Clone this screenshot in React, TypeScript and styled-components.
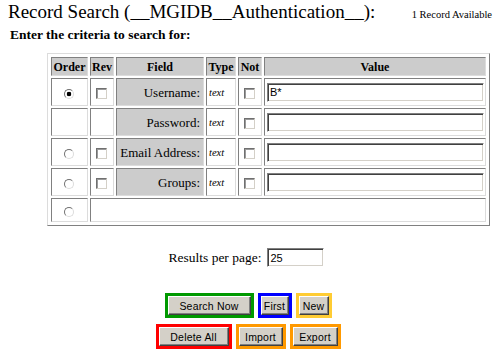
import React from 'react';
import styled, { createGlobalStyle } from 'styled-components';

const GlobalStyle = createGlobalStyle`
  html, body {
    margin: 0;
    padding: 0;
    background: #fff;
  }
  body {
    font-family: "Liberation Serif", "Times New Roman", serif;
    color: #000;
  }
`;

const serif = `"Liberation Serif", "Times New Roman", serif`;
const sans = `"Liberation Sans", Arial, sans-serif`;

const Page = styled.div`
  width: 496px;
  height: 353px;
  overflow: hidden;
`;

const TitleLine = styled.div`
  display: flex;
  justify-content: space-between;
  align-items: baseline;
  height: 23px;
  line-height: 23px;
  padding: 0 4px 0 8px;
  white-space: nowrap;
`;

const Title = styled.span`
  font-size: 19px;
`;

const Count = styled.span`
  font-size: 10.5px;
`;

const Prompt = styled.div`
  margin-top: 5px;
  padding-left: 10px;
  height: 14px;
  line-height: 14px;
  font-size: 13.5px;
  font-weight: bold;
  white-space: nowrap;
`;

const Grid = styled.table`
  margin: 11px 0 0 47px;
  border-collapse: separate;
  border-spacing: 2px;
  padding: 1px;
  table-layout: fixed;
  width: 443px;
  border: 1px solid;
  border-color: #dcdcdc #808080 #808080 #dcdcdc;
  font-family: ${serif};
  font-size: 13px;
  color: #000;
`;

const Head = styled.th<{ $w: number }>`
  box-sizing: border-box;
  width: ${(p) => p.$w}px;
  height: 19px;
  padding: 0;
  background: #cccccc;
  border: 1px solid;
  border-color: #808080 #dcdcdc #dcdcdc #808080;
  font-family: ${serif};
  font-size: 12px;
  font-weight: bold;
  line-height: 1;
  text-align: center;
  vertical-align: middle;
`;

const Cell = styled.td<{ $shade?: boolean; $align?: string; $h: number }>`
  box-sizing: border-box;
  height: ${(p) => p.$h}px;
  padding: 0 3px 0 2px;
  background: ${(p) => (p.$shade ? '#cccccc' : '#fff')};
  border: 1px solid;
  border-color: #808080 #dcdcdc #dcdcdc #808080;
  font-family: ${serif};
  font-size: 13px;
  text-align: ${(p) => p.$align ?? 'center'};
  vertical-align: middle;
  white-space: nowrap;
  line-height: 1;
`;

const TypeText = styled.span`
  font-family: ${serif};
  font-size: 10.5px;
  font-style: italic;
`;

const Radio = styled.span<{ $on?: boolean }>`
  display: inline-block;
  box-sizing: border-box;
  width: 10px;
  height: 10px;
  border-radius: 50%;
  border: 1px solid;
  border-color: #707070 #dcdcdc #dcdcdc #707070;
  background: ${(p) => (p.$on ? 'radial-gradient(circle, #000 0 2px, #fff 2.6px)' : '#fff')};
  vertical-align: middle;
`;

const Check = styled.span`
  display: inline-block;
  box-sizing: border-box;
  width: 11px;
  height: 11px;
  border: 1px solid;
  border-color: #707070 #d4d0c8 #d4d0c8 #707070;
  box-shadow: inset 1px 1px 0 #9a9a9a;
  background: #fff;
  vertical-align: middle;
`;

const TextBox = styled.input<{ $w: number }>`
  box-sizing: border-box;
  width: ${(p) => p.$w}px;
  height: 19px;
  margin: 0;
  padding: 0 2px;
  border: 1px solid;
  border-color: #808080 #fff #fff #808080;
  box-shadow: inset 1px 1px 0 #404040, inset -1px -1px 0 #d4d0c8;
  background: #fff;
  font-family: ${sans};
  font-size: 11px;
  color: #000;
  outline: none;
  vertical-align: middle;
`;

const PerPage = styled.div`
  display: flex;
  justify-content: center;
  align-items: center;
  gap: 6px;
  margin-top: 22px;
  padding-right: 3px;
  height: 19px;
  font-size: 13.5px;
  white-space: nowrap;
`;

const ButtonRow = styled.div<{ $top: number }>`
  display: flex;
  justify-content: center;
  gap: 4px;
  margin-top: ${(p) => p.$top}px;
`;

const Frame = styled.span<{ $c: string }>`
  display: inline-flex;
  padding: 3px;
  background: ${(p) => p.$c};
`;

const Btn = styled.button<{ $w: number }>`
  box-sizing: border-box;
  width: ${(p) => p.$w}px;
  height: 19px;
  margin: 0;
  padding: 0;
  background: #d4d0c8;
  border: 1px solid;
  border-color: #fff #404040 #404040 #fff;
  box-shadow: inset -1px -1px 0 #808080;
  font-family: ${sans};
  font-size: 10.5px;
  letter-spacing: 0.2px;
  color: #000;
`;

const fields = [
  { label: 'Username:', value: 'B*', order: true, on: true },
  { label: 'Password:', value: '', order: false, on: false },
  { label: 'Email Address:', value: '', order: true, on: false },
  { label: 'Groups:', value: '', order: true, on: false },
];

const topButtons = [
  { text: 'Search Now', color: '#009900', w: 83 },
  { text: 'First', color: '#0000ff', w: 28 },
  { text: 'New', color: '#ffcc33', w: 30 },
];

const bottomButtons = [
  { text: 'Delete All', color: '#ff0000', w: 70 },
  { text: 'Import', color: '#ff9900', w: 44 },
  { text: 'Export', color: '#ff9900', w: 45 },
];

export default function App() {
  return (
    <Page>
      <GlobalStyle />
      <TitleLine>
        <Title>Record Search (__MGIDB__Authentication__):</Title>
        <Count>1 Record Available</Count>
      </TitleLine>
      <Prompt>Enter the criteria to search for:</Prompt>
      <Grid>
        <thead>
          <tr>
            <Head $w={37}>Order</Head>
            <Head $w={24}>Rev</Head>
            <Head $w={88}>Field</Head>
            <Head $w={30}>Type</Head>
            <Head $w={24}>Not</Head>
            <Head $w={222}>Value</Head>
          </tr>
        </thead>
        <tbody>
          {fields.map((f) => (
            <tr key={f.label}>
              <Cell $h={28}>{f.order ? <Radio $on={f.on} /> : null}</Cell>
              <Cell $h={28}>{f.order ? <Check /> : null}</Cell>
              <Cell $h={28} $shade $align='right'>
                {f.label}
              </Cell>
              <Cell $h={28} $align='left'>
                <TypeText>text</TypeText>
              </Cell>
              <Cell $h={28}>
                <Check />
              </Cell>
              <Cell $h={28} $align='left'>
                <TextBox $w={217} defaultValue={f.value} readOnly />
              </Cell>
            </tr>
          ))}
          <tr>
            <Cell $h={24}>
              <Radio />
            </Cell>
            <Cell $h={24} colSpan={5} />
          </tr>
        </tbody>
      </Grid>
      <PerPage>
        Results per page:
        <TextBox $w={57} defaultValue='25' readOnly />
      </PerPage>
      <ButtonRow $top={26}>
        {topButtons.map((b) => (
          <Frame $c={b.color} key={b.text}>
            <Btn $w={b.w}>{b.text}</Btn>
          </Frame>
        ))}
      </ButtonRow>
      <ButtonRow $top={6}>
        {bottomButtons.map((b) => (
          <Frame $c={b.color} key={b.text}>
            <Btn $w={b.w}>{b.text}</Btn>
          </Frame>
        ))}
      </ButtonRow>
    </Page>
  );
}
